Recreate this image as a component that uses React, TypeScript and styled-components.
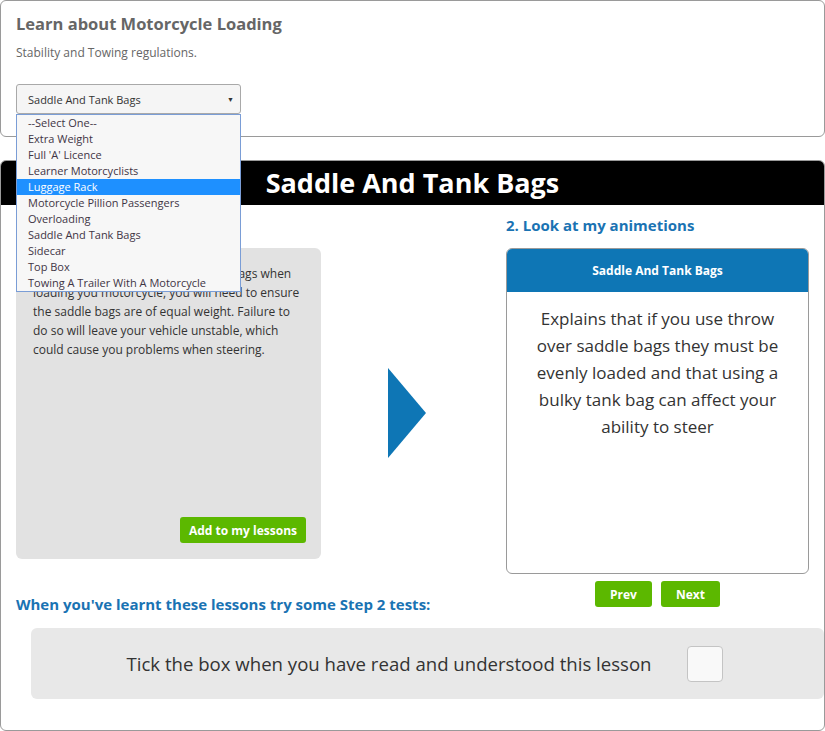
import React from "react";
import styled, { createGlobalStyle } from "styled-components";

const GlobalStyle = createGlobalStyle`
  html, body { margin: 0; padding: 0; background: #fff; }
  body { font-family: "Open Sans", "Liberation Sans", sans-serif; color: #333; }
  * { box-sizing: border-box; }
`;

const Page = styled.div`
  width: 825px;
  display: flex;
  flex-direction: column;
  gap: 23px;
`;

const Card = styled.section`
  border: 1px solid #9a9a9a;
  border-radius: 6px;
  background: #fff;
`;

const IntroCard = styled(Card)`
  padding: 11px 15px 22px;
  height: 137px;
`;

const Title = styled.h1`
  margin: 0;
  font-size: 16.5px;
  line-height: 24px;
  font-weight: 700;
  color: #666;
`;

const Subtitle = styled.p`
  margin: 8px 0 0;
  font-size: 12px;
  line-height: 18px;
  color: #666;
`;

const SelectWrap = styled.div`
  position: relative;
  margin-top: 22px;
  width: 225px;
  z-index: 5;
`;

const SelectBox = styled.div`
  height: 30px;
  border: 1px solid #a9a9a9;
  border-radius: 3px;
  background: #f5f5f5;
  display: flex;
  align-items: center;
  justify-content: space-between;
  padding: 0 6px 0 11px;
  font-size: 11px;
  color: #333;
`;

const Arrow = styled.span`
  font-size: 7px;
  color: #333;
`;

const OptionList = styled.ul`
  position: absolute;
  top: 100%;
  left: 0;
  width: 225px;
  margin: 0;
  padding: 0;
  list-style: none;
  border: 1px solid #7a9dd6;
  background: #f7f7f7;
`;

const Option = styled.li<{ $active?: boolean }>`
  height: 16px;
  line-height: 16px;
  padding-left: 11px;
  font-size: 11px;
  white-space: nowrap;
  color: ${(p) => (p.$active ? "#fff" : "#3f3545")};
  background: ${(p) => (p.$active ? "#1e90ff" : "transparent")};
`;

const LessonCard = styled(Card)`
  height: 571px;
  overflow: hidden;
`;

const LessonHeader = styled.h2`
  margin: 0;
  height: 44px;
  background: #000;
  color: #fff;
  font-size: 27px;
  line-height: 44px;
  font-weight: 700;
  text-align: center;
`;

const LessonBody = styled.div`
  padding: 10px 0 0 15px;
`;

const Columns = styled.div`
  display: flex;
  align-items: flex-start;
`;

const LeftCol = styled.div`
  width: 305px;
  display: flex;
  flex-direction: column;
`;

const MidCol = styled.div`
  width: 185px;
  padding: 153px 0 0 67px;
`;

const RightCol = styled.div`
  width: 303px;
  display: flex;
  flex-direction: column;
`;

const StepHeading = styled.h3`
  margin: 0;
  font-size: 15px;
  line-height: 20px;
  font-weight: 700;
  color: #1a73b3;
  white-space: nowrap;
`;

const NotesBox = styled.div`
  margin-top: 13px;
  height: 311px;
  background: #e2e2e2;
  border-radius: 6px;
  padding: 16px 15px 16px 17px;
  display: flex;
  flex-direction: column;
`;

const NotesText = styled.p`
  margin: 0;
  font-size: 12px;
  line-height: 19px;
  color: #333;
`;

const GreenButton = styled.button`
  border: none;
  border-radius: 3px;
  background: #5cb800;
  color: #fff;
  font-family: "Open Sans", "Liberation Sans", sans-serif;
  font-weight: 700;
  font-size: 12px;
  height: 26px;
  padding: 0;
  white-space: nowrap;
  cursor: pointer;
`;

const AddButton = styled(GreenButton)`
  margin-top: auto;
  align-self: flex-end;
  width: 126px;
`;

const Step2Heading = styled(StepHeading)`
  margin-top: 35px;
`;

const AnimCard = styled.div`
  margin-top: 13px;
  height: 326px;
  border: 1px solid #9a9a9a;
  border-radius: 6px;
  overflow: hidden;
  display: flex;
  flex-direction: column;
`;

const AnimHeader = styled.div`
  height: 43px;
  background: #0e76b5;
  color: #fff;
  font-size: 12px;
  font-weight: 700;
  display: flex;
  align-items: center;
  justify-content: center;
`;

const AnimText = styled.p`
  margin: 0;
  padding: 13px 24px 0;
  font-size: 17px;
  line-height: 27px;
  text-align: center;
  color: #333;
`;

const NavRow = styled.div`
  margin-top: 7px;
  display: flex;
  justify-content: center;
  gap: 9px;
`;

const NavButton = styled(GreenButton)<{ $w: number }>`
  width: ${(p) => p.$w}px;
`;

const TickBox = styled.div`
  margin: 14px 0 0 15px;
  height: 71px;
  background: #e8e8e8;
  border-radius: 6px;
  display: flex;
  align-items: center;
  justify-content: center;
  gap: 35px;
  padding-right: 6px;
`;

const TickText = styled.span`
  font-size: 18.6px;
  color: #333;
`;

const Checkbox = styled.span`
  width: 36px;
  height: 36px;
  border: 1px solid #c4c4c4;
  border-radius: 4px;
  background: #f9f9f9;
`;

const options = [
  "--Select One--",
  "Extra Weight",
  "Full 'A' Licence",
  "Learner Motorcyclists",
  "Luggage Rack",
  "Motorcycle Pillion Passengers",
  "Overloading",
  "Saddle And Tank Bags",
  "Sidecar",
  "Top Box",
  "Towing A Trailer With A Motorcycle",
];

export default function App() {
  return (
    <>
      <GlobalStyle />
      <Page>
        <IntroCard>
          <Title>Learn about Motorcycle Loading</Title>
          <Subtitle>Stability and Towing regulations.</Subtitle>
          <SelectWrap>
            <SelectBox>
              <span>Saddle And Tank Bags</span>
              <Arrow>▼</Arrow>
            </SelectBox>
            <OptionList>
              {options.map((o) => (
                <Option key={o} $active={o === "Luggage Rack"}>
                  {o}
                </Option>
              ))}
            </OptionList>
          </SelectWrap>
        </IntroCard>

        <LessonCard>
          <LessonHeader>Saddle And Tank Bags</LessonHeader>
          <LessonBody>
            <Columns>
              <LeftCol>
                <StepHeading>1. Read my notes</StepHeading>
                <NotesBox>
                  <NotesText>
                    If you are using 'throw over' saddle bags when loading you
                    motorcycle, you will need to ensure the saddle bags are of
                    equal weight. Failure to do so will leave your vehicle
                    unstable, which could cause you problems when steering.
                  </NotesText>
                  <AddButton>Add to my lessons</AddButton>
                </NotesBox>
                <Step2Heading>
                  When you've learnt these lessons try some Step 2 tests:
                </Step2Heading>
              </LeftCol>
              <MidCol>
                <svg width="38" height="90" viewBox="0 0 38 90">
                  <polygon points="0,0 38,45 0,90" fill="#0e76b5" />
                </svg>
              </MidCol>
              <RightCol>
                <StepHeading>2. Look at my animetions</StepHeading>
                <AnimCard>
                  <AnimHeader>Saddle And Tank Bags</AnimHeader>
                  <AnimText>
                    Explains that if you use throw over saddle bags they must be
                    evenly loaded and that using a bulky tank bag can affect
                    your ability to steer
                  </AnimText>
                </AnimCard>
                <NavRow>
                  <NavButton $w={57}>Prev</NavButton>
                  <NavButton $w={59}>Next</NavButton>
                </NavRow>
              </RightCol>
            </Columns>
            <TickBox>
              <TickText>
                Tick the box when you have read and understood this lesson
              </TickText>
              <Checkbox />
            </TickBox>
          </LessonBody>
        </LessonCard>
      </Page>
    </>
  );
}
